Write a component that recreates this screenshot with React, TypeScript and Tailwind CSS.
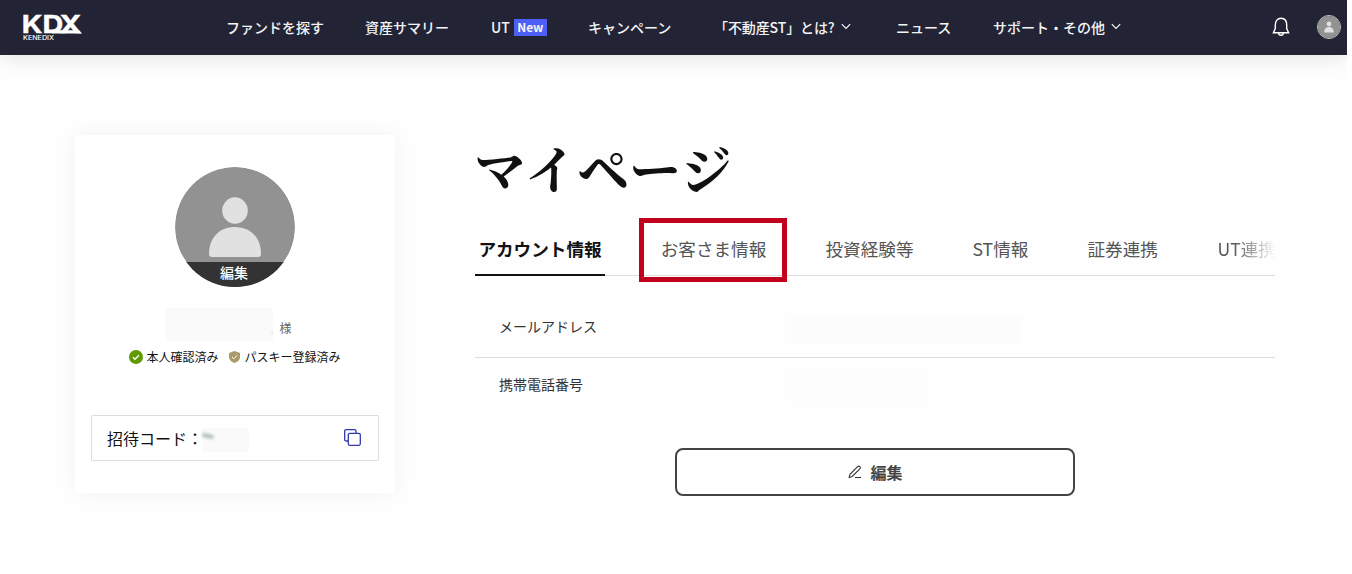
import React from "react";

const Chevron = () => (
  <svg className="ml-[6px] h-[7px] w-[10px] shrink-0" viewBox="0 0 10 7" fill="none" stroke="#fff" strokeWidth="1.1">
    <path d="M.8 1.2 5 5.4 9.2 1.2" />
  </svg>
);

const Person = ({ className }: { className: string }) => (
  <svg className={className} viewBox="0 0 120 120">
    <circle cx="60" cy="60" r="60" fill="#929292" />
    <ellipse cx="60" cy="43.5" rx="12.8" ry="13.2" fill="#e1e1e1" />
    <path d="M34 87C34 70 45 60 60 60s26 10 26 27c0 2-1 3-3 3H37c-2 0-3-1-3-3Z" fill="#e1e1e1" />
  </svg>
);

const nav = [
  { label: "ファンドを探す", x: "w-[139px]" },
  { label: "資産サマリー", x: "w-[126px]" },
  { label: "UT", x: "w-[97px]", badge: "New" },
  { label: "キャンペーン", x: "w-[126px]" },
  { label: "「不動産ST」とは?", x: "w-[182px] tracking-[-0.1px]", more: true },
  { label: "ニュース", x: "w-[97px]" },
  { label: "サポート・その他", x: "w-[140px]", more: true },
];

const tabs = [
  { label: "投資経験等", w: "w-[147px]" },
  { label: "ST情報", w: "w-[115px]" },
  { label: "証券連携", w: "w-[130px]" },
];

export default function App() {
  return (
    <div className="h-[574px] w-[1352px] overflow-hidden bg-white font-['Noto_Sans_CJK_JP',sans-serif] text-[#111]">
      <div className="h-full w-[1347px] overflow-hidden bg-[#fefefe]">
        <header className="flex h-[55px] items-center bg-[#222435] text-white shadow-[0_4px_20px_rgba(0,0,0,0.1)]">
          <svg className="ml-[23px] h-[26px] w-[60px] shrink-0 overflow-visible" viewBox="0 0 60 26" fill="#fff">
            <text x="-1.3" y="18.3" fontFamily="Inter" fontWeight="700" fontSize="24.5" stroke="#fff" strokeWidth=".4" textLength="41.500" lengthAdjust="spacingAndGlyphs">KD</text>
            <text x="36.500" y="18.3" fontFamily="Inter" fontWeight="700" fontSize="24.5" stroke="#fff" strokeWidth=".4" textLength="22" lengthAdjust="spacingAndGlyphs">X</text>
            <path d="M29 18.500v-3.200h27l3 3.200Z" />
            <text x="0" y="24.8" fontFamily="Inter" fontSize="5.8" fontWeight="500" textLength="31" lengthAdjust="spacingAndGlyphs">KENEDIX</text>
          </svg>
          <nav className="-mt-0.5 ml-[143px] flex items-center text-sm font-medium leading-5 text-[#f4f4f5]">
            {nav.map((n) => (
              <a key={n.label} className={`flex shrink-0 items-center whitespace-nowrap ${n.x}`}>
                {n.label}
                {n.badge && (
                  <span className="ml-1 mt-0.5 h-[17px] w-[33px] bg-[#4e5ff5] text-center text-xs font-bold leading-[16px]">{n.badge}</span>
                )}
                {n.more && <Chevron />}
              </a>
            ))}
          </nav>
          <svg className="-mt-px ml-auto h-5 w-[18px]" viewBox="0 0 18 20" fill="none" stroke="#fff" strokeWidth="1.4">
            <path d="M3.300 11.500V8C3.300 4 5.500 1.300 9 1.300S14.700 4 14.700 8v3.500l1.900 4.300H1.400ZM6.500 16c.3 3 4.700 3 5 0" />
          </svg>
          <div className="-mt-px ml-[27px] mr-[6px] flex size-6 rounded-full border border-[#c8c8c8]">
            <Person className="size-full" />
          </div>
        </header>

        <main className="flex px-[75px] pt-20">
          <section className="flex h-[358px] w-80 shrink-0 flex-col items-center bg-white px-4 pt-8 shadow-[0_0_20px_rgba(0,0,0,0.05)]">
            <div className="grid size-[120px] overflow-hidden rounded-full">
              <Person className="col-start-1 row-start-1 size-[120px]" />
              <div className="col-start-1 row-start-1 h-[25px] self-end bg-[#333] pr-0.5 text-center text-sm font-medium leading-[21px] text-white">編集</div>
            </div>
            <div className="ml-[-13px] mt-[21px] flex h-[34px] items-end">
              <div className="flex h-[34px] w-[107px] items-end justify-end bg-[#fafafa]">
                <span className="mb-[7px] h-1 w-0.5 bg-[#efe8ec] blur-[1px]" />
              </div>
              <span className="ml-[7px] w-3 text-xs leading-[28px] text-[#666]">様</span>
            </div>
            <div className="mt-1.5 flex h-[18px] items-center whitespace-nowrap text-xs leading-[18px]">
              <svg className="mr-[3px] size-[14px]" viewBox="0 0 14 14">
                <circle cx="7" cy="7" r="7" fill="#5f9a00" />
                <path d="m4 7.2 2 2 4-4" fill="none" stroke="#fff" strokeWidth="1.4" />
              </svg>
              <span>本人確認済み</span>
              <svg className="ml-2.5 mr-[5px] h-3 w-[11px]" viewBox="0 0 11 12">
                <path d="M5.5 0 11 2v4c0 3-2.200 5-5.500 6C2.200 11 0 9 0 6V2Z" fill="#a99b6b" />
                <path d="m3 6 1.800 1.800 3.300-3.500" fill="none" stroke="#fff" />
              </svg>
              <span>パスキー登録済み</span>
            </div>
            <div className="mt-[49px] flex h-[46px] w-72 items-center rounded-[1px] border border-[#ddd] px-[15px]">
              <span className="text-base leading-6">招待コード：</span>
              <span className="ml-[-1px] mt-1 flex h-6 w-[47px] bg-[#fafafa]">
                <span className="mt-1.5 h-1 w-3 rotate-12 rounded-full bg-[#aebcb8] blur-[1.5px]" />
              </span>
              <svg className="-mt-px ml-auto mr-[2px] size-[17px]" viewBox="0 0 17 17" fill="none" stroke="#3039ab" strokeWidth="1.3">
                <rect x="4.300" y="4.300" width="12" height="12" rx="1.500" />
                <path d="M4 12H2.200Q.7 12 .7 10.500V2.200Q.7.7 2.200.7h8.300Q12 .7 12 2.200V4" />
              </svg>
            </div>
          </section>

          <section className="ml-20 w-[800px] shrink-0">
            <h1 className="-ml-px h-[76px] whitespace-nowrap font-['Noto_Serif_CJK_JP','Noto_Sans_CJK_JP',serif] text-[52px] font-bold leading-[65px]">マイページ</h1>
            <div className="mt-[7px] flex h-[64px] overflow-hidden">
              <div className="flex h-[58px] w-[164px] shrink-0 border-b border-[#ddd]">
                <span className="h-[58px] w-[130px] shrink-0 border-b-2 border-[#111] pt-[18px] text-center text-[17.6px] font-bold leading-[26px]">アカウント情報</span>
              </div>
              <div className="z-10 flex h-[64px] w-[148px] shrink-0 flex-col border-[5px] border-[#c0001c]">
                <span className="h-[53px] border-b border-[#ddd] pl-px pt-[13px] text-center text-[17.6px] leading-[26px] text-[#555]">お客さま情報</span>
              </div>
              <div className="flex h-[58px] w-[488px] shrink-0 border-b border-[#ddd] pl-[38.500px] pt-[18px] text-[17.6px] leading-[26px] text-[#555]">
                {tabs.map((t) => (
                  <span key={t.label} className={`shrink-0 whitespace-nowrap ${t.w}`}>{t.label}</span>
                ))}
                <span className="w-[58px] shrink-0 whitespace-nowrap [mask-image:linear-gradient(to_right,black_25%,transparent)]">UT連携</span>
              </div>
            </div>
            <div className="mt-[17px] flex h-[59px] border-b border-[#ddd] px-6 text-sm leading-[21px] text-[#333]">
              <span className="w-[292px] pt-[17px]">メールアドレス</span>
              <span className="mt-[18px] h-[26px] w-[230px] bg-[#fcfcfc]" />
            </div>
            <div className="flex h-[58px] px-6 text-sm leading-[21px] text-[#333]">
              <span className="w-[292px] pt-[16px]">携帯電話番号</span>
              <span className="mt-3 h-[34px] w-[137px] bg-[#fdfdfd]" />
            </div>
            <button className="ml-[200px] mt-8 flex h-12 w-[400px] items-center justify-center rounded-lg border-2 border-[#444] bg-white pl-px text-base font-bold text-[#444]">
              <svg className="mr-2 size-[14px]" viewBox="0 0 14 14" fill="none" stroke="#333" strokeWidth="1.1">
                <path d="M1.200 12.500 2 9.300 9.600 1.700c1.600-1.500 3.700.6 2.200 2.200L4.200 11.500Zm5.800 0h6" />
              </svg>
              編集
            </button>
          </section>
        </main>
      </div>
    </div>
  );
}
